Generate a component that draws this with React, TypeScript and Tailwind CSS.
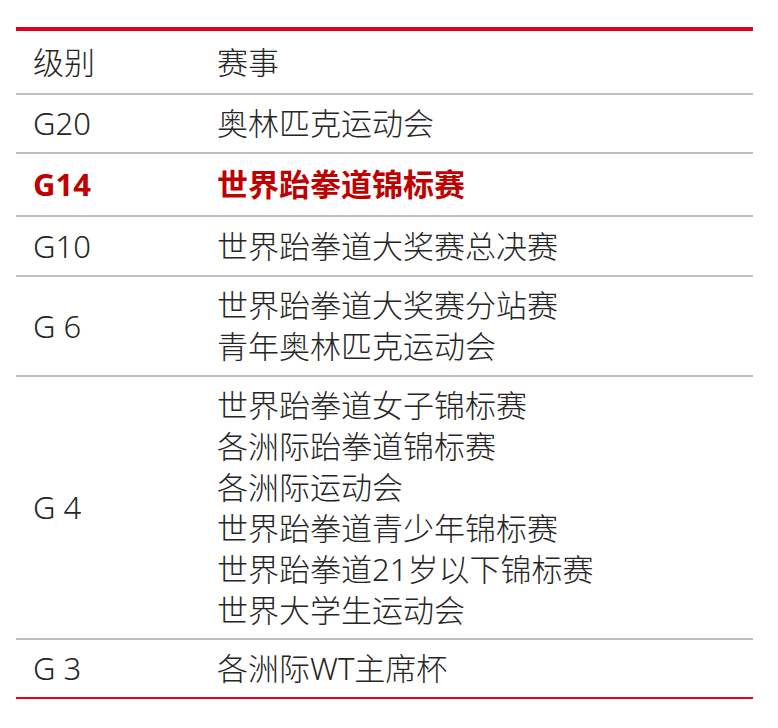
import React from "react";

interface Row {
  level: string;
  events: string[];
  height: string;
  highlight?: boolean;
}

// heights include the 2px bottom border (border-box)
const rows: Row[] = [
  { level: "G20", events: ["奥林匹克运动会"], height: "h-[59px]" },
  { level: "G14", events: ["世界跆拳道锦标赛"], height: "h-[63px]", highlight: true },
  { level: "G10", events: ["世界跆拳道大奖赛总决赛"], height: "h-[60px]" },
  { level: "G 6", events: ["世界跆拳道大奖赛分站赛", "青年奥林匹克运动会"], height: "h-[100px]" },
  {
    level: "G 4",
    events: [
      "世界跆拳道女子锦标赛",
      "各洲际跆拳道锦标赛",
      "各洲际运动会",
      "世界跆拳道青少年锦标赛",
      "世界跆拳道21岁以下锦标赛",
      "世界大学生运动会",
    ],
    height: "h-[263px]",
  },
  { level: "G 3", events: ["各洲际WT主席杯"], height: "h-[59px]" },
];

const App: React.FC = () => {
  return (
    <div className="min-h-[728px] bg-white pt-[27px] font-['Noto_Sans','Noto_Sans_CJK_SC',sans-serif]">
      <div className="ml-[16px] w-[737px] border-t-[4px] border-[#e3001b]">
        <div className="flex h-[64px] items-center border-b-2 border-[#c0c0c0] pl-[17px] text-[31px] font-light text-[#262626]">
          <div className="w-[184px]">级别</div>
          <div>赛事</div>
        </div>
        {rows.map((row, i) => (
          <div
            key={row.level}
            className={`flex items-center border-b-2 pl-[17px] text-[31px] leading-[41px] ${row.height} ${
              i === rows.length - 1 ? "border-[#e3001b]" : "border-[#c0c0c0]"
            } ${row.highlight ? "font-bold text-[#c00000]" : "font-light text-[#262626]"}`}
          >
            <div className="w-[184px]">{row.level}</div>
            <div className="flex flex-col">
              {row.events.map((ev) => (
                <span key={ev}>{ev}</span>
              ))}
            </div>
          </div>
        ))}
      </div>
    </div>
  );
};

export default App;
